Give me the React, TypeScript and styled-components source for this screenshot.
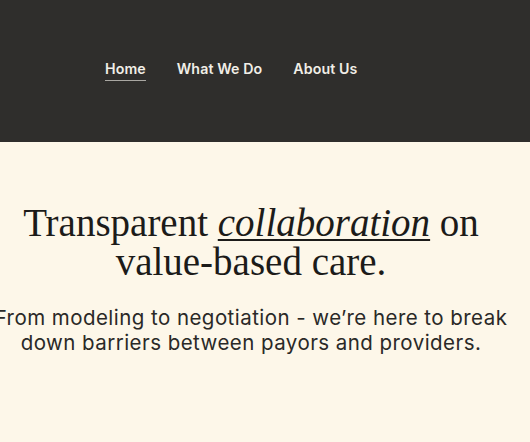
import React from "react";
import styled, { createGlobalStyle } from "styled-components";

const Global = createGlobalStyle`
  html, body { margin: 0; padding: 0; }
  body { background: #fdf7e9; overflow-x: hidden; }
`;

const Page = styled.div`
  width: 530px;
  min-height: 442px;
  background: #fdf7e9;
  overflow: hidden;
`;

const Header = styled.header`
  height: 142px;
  background: #2f2e2c;
  display: flex;
  align-items: center;
  padding-left: 105px;
  box-sizing: border-box;
`;

const Nav = styled.nav`
  display: flex;
  gap: 31px;
  align-items: center;
  margin-top: -2px;
`;

const NavLink = styled.a<{ $active?: boolean }>`
  font-family: Inter, "Liberation Sans", sans-serif;
  font-weight: 600;
  font-size: 14.2px;
  color: #f1eee7;
  text-decoration: none;
  padding-bottom: 3px;
  border-bottom: 1.5px solid ${(p) => (p.$active ? "#a9a7a2" : "transparent")};
  letter-spacing: 0.1px;
`;

const Hero = styled.section`
  width: 540px;
  margin-left: -19px;
  padding-top: 61px;
  text-align: center;
  color: #1c1b19;
`;

const Title = styled.h1`
  margin: 0;
  font-family: "Liberation Serif", serif;
  font-weight: 400;
  font-size: 39px;
  line-height: 39px;
`;

const Em = styled.em`
  font-style: italic;
  text-decoration: underline;
  text-decoration-thickness: 2px;
  text-underline-offset: 3px;
`;

const Sub = styled.p`
  margin: 24px 0 0;
  font-family: Inter, "Liberation Sans", sans-serif;
  font-weight: 400;
  font-size: 20.5px;
  line-height: 25px;
  letter-spacing: 0.45px;
  color: #2a2927;
`;

export default function App() {
  return (
    <Page>
      <Global />
      <Header>
        <Nav>
          <NavLink $active>Home</NavLink>
          <NavLink>What We Do</NavLink>
          <NavLink>About Us</NavLink>
        </Nav>
      </Header>
      <Hero>
        <Title>
          Transparent <Em>collaboration</Em> on
          <br />
          value-based care.
        </Title>
        <Sub>
          From modeling to negotiation - we’re here to break
          <br />
          down barriers between payors and providers.
        </Sub>
      </Hero>
    </Page>
  );
}
